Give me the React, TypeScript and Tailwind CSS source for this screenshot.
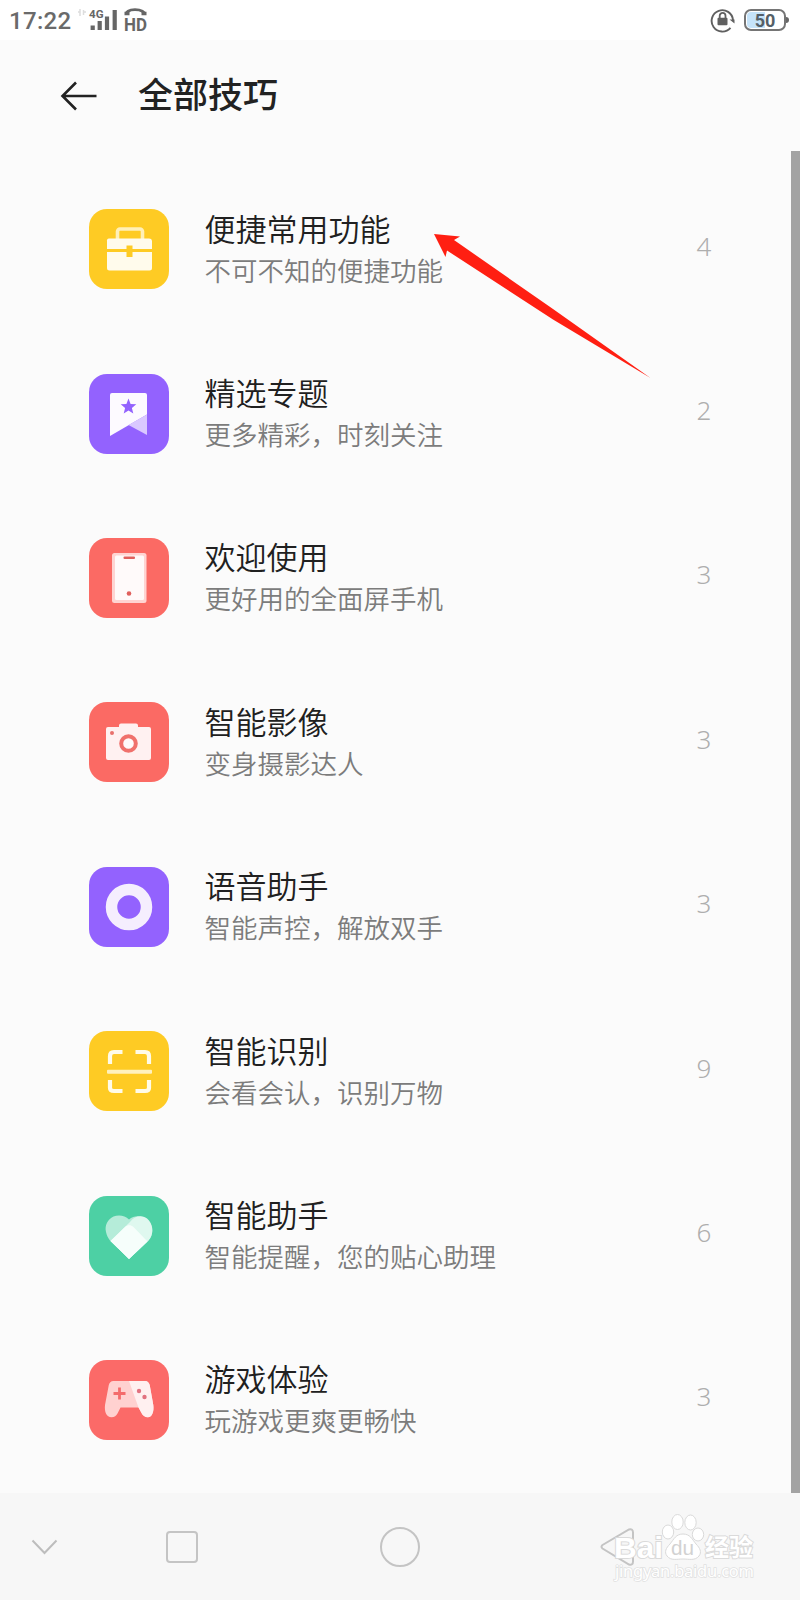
import type { ReactNode } from 'react';

type Tip = {
  title: string;
  desc: string;
  count: number;
  bg: string;
  icon: ReactNode;
};

const tips: Tip[] = [
  {
    title: '便捷常用功能',
    desc: '不可不知的便捷功能',
    count: 4,
    bg: 'bg-[#fecb24]',
    icon: (
      <>
        <path d="M28.500 32v-9.500a2.500 2.500 0 0 1 2.500-2.500h20a2.500 2.500 0 0 1 2.500 2.500V32" fill="none" stroke="#fff0b8" strokeWidth="3.600" />
        <path d="M20 29.500h40a3 3 0 0 1 3 3V40H43.500v-3.500h-6V40H18v-7.500a2.500 2.500 0 0 1 2-3z" fill="#fffbec" />
        <path d="M18 43h19.500v5h6v-5H63v16a2.500 2.500 0 0 1-2.500 2.500h-40A2.500 2.500 0 0 1 18 59z" fill="#fffbec" />
      </>
    ),
  },
  {
    title: '精选专题',
    desc: '更多精彩，时刻关注',
    count: 2,
    bg: 'bg-[#9362fe]',
    icon: (
      <>
        <path d="M23 19h33a2 2 0 0 1 2 2v19.500L21 62V21a2 2 0 0 1 2-2z" fill="#fdfaff" />
        <path d="M58 40.500V61L39.500 51z" fill="#dac8ff" />
        <path d="M39.500 24.500l2.100 5.400 5.700.3-4.400 3.700 1.400 5.600-4.800-3.100-4.800 3.100 1.400-5.600-4.400-3.700 5.700-.3z" fill="#9362fe" />
      </>
    ),
  },
  {
    title: '欢迎使用',
    desc: '更好用的全面屏手机',
    count: 3,
    bg: 'bg-[#fb6a64]',
    icon: (
      <>
        <rect x="23" y="15" width="34.500" height="50" rx="2.500" fill="#ffd4d2" />
        <rect x="26" y="17.500" width="29" height="44.500" rx="1.500" fill="#fffafa" />
        <rect x="34.500" y="18.500" width="11.500" height="2.400" rx="1" fill="#e0605d" />
        <circle cx="40" cy="55.500" r="2.300" fill="#e0605d" />
      </>
    ),
  },
  {
    title: '智能影像',
    desc: '变身摄影达人',
    count: 3,
    bg: 'bg-[#fb6a64]',
    icon: (
      <>
        <path d="M19 25h11v-1.500a2 2 0 0 1 2-2h15a2 2 0 0 1 2 2V25h11a2 2 0 0 1 2 2v29a2 2 0 0 1-2 2H19a2 2 0 0 1-2-2V27a2 2 0 0 1 2-2z" fill="#fff1f1" />
        <circle cx="39.500" cy="41.500" r="7.300" fill="#fffafa" stroke="#f0716c" strokeWidth="4" />
        <circle cx="23" cy="31" r="2" fill="#e8706c" />
      </>
    ),
  },
  {
    title: '语音助手',
    desc: '智能声控，解放双手',
    count: 3,
    bg: 'bg-[#9362fe]',
    icon: <circle cx="40" cy="40" r="17.500" fill="none" stroke="#f5eefe" strokeWidth="11.500" />,
  },
  {
    title: '智能识别',
    desc: '会看会认，识别万物',
    count: 9,
    bg: 'bg-[#fecb24]',
    icon: (
      <>
        <path
          d="M21 33v-8q0-4 4-4h8.500M46.500 21H56q4 0 4 4v8M60 49v8q0 3-4 3h-9.500M33.500 60H25q-4 0-4-3v-8"
          fill="none"
          stroke="#fffbe8"
          strokeWidth="4.200"
        />
        <rect x="18" y="38.700" width="45" height="4" rx="1" fill="#fff1bd" />
      </>
    ),
  },
  {
    title: '智能助手',
    desc: '智能提醒，您的贴心助理',
    count: 6,
    bg: 'bg-[#4dd0a4]',
    icon: (
      <>
        <path d="M40 23.500C36 19 29 18.500 24.500 20.500c-6 3-9 9-7.500 15.500.6 3 2 6 4 8.500L40 63l19.500-18.500c5-5 5-14 .5-19-5.500-6-14-7-20-2z" fill="#b5ecd9" />
        <path d="M21.500 45L41 26c6-7.500 14-7 19-1.500 4.500 5.500 4.500 14.500-.5 20L40 63z" fill="#dff8ef" />
        <path d="M21.500 45L36 31c2.500-2.500 6-2.500 8.500 0L58.500 45.500 40 63z" fill="#f6fefb" />
      </>
    ),
  },
  {
    title: '游戏体验',
    desc: '玩游戏更爽更畅快',
    count: 3,
    bg: 'bg-[#fb6a68]',
    icon: (
      <>
        <path d="M24.500 21h31.500c2.800 0 4 1.800 4.700 4l3.600 20c.8 6-.8 12.200-5.500 12.200-3 0-5-1.700-6-3.700L49.500 47.500h-18L28.500 53.500c-1.200 2.200-3 3.700-6 3.700-5 0-7.300-5.200-6.500-12.200l3.800-20c.5-2.200 2-4 4.700-4z" fill="#ffd1d0" />
        <path d="M40 21h16c2.800 0 4 1.800 4.700 4l3.600 20c.8 6-.8 12.200-5.500 12.200-3 0-5-1.700-6-3.700L49.500 47.500z" fill="#fff0f0" />
        <path d="M30.500 27.500v12M24.500 33.500h12" stroke="#f46b6b" strokeWidth="2.800" />
        <circle cx="50" cy="31" r="2.200" fill="#e27280" />
        <circle cx="55.500" cy="37" r="2.200" fill="#e27280" />
      </>
    ),
  },
];

const StatusBar = () => {
  return (
    <div className="h-10 bg-white flex items-center justify-between pl-[9px] pr-[11px] text-[#6a6a6a]">
      <div className="flex items-center">
        <span className="font-['Roboto'] font-medium text-[24px] leading-10 pt-[2px] tracking-[0.3px] w-[68px]">17:22</span>
        <svg width="75" height="40" viewBox="77 0 75 40" fill="none">
          <path d="M80 9v7M83.500 10v5M78 12h2M83.500 12h2.500" stroke="#ddd" strokeWidth="1.500" />
          <text x="89" y="17.500" fontSize="11" fontWeight="700" fontFamily="Roboto, sans-serif" fill="#666" textLength="14.500" lengthAdjust="spacingAndGlyphs">4G</text>
          <path d="M92.700 25.500v4.500M99.700 21v9M107 16.500v13.500M114.700 10v20" stroke="#666" strokeWidth="4.200" />
          <path d="M126.500 13.500c0-1 1.500-3.800 8.500-3.800s9.500 2.800 9.500 3.800" stroke="#666" strokeWidth="2.800" />
          <path d="M124.500 13.500h5M141.500 13.500h5" stroke="#666" strokeWidth="3.600" />
          <text x="124" y="31" fontSize="19" fontWeight="700" fontFamily="Roboto, sans-serif" fill="#666" textLength="23" lengthAdjust="spacingAndGlyphs">HD</text>
        </svg>
      </div>
      <div className="flex items-center gap-[9px]">
        <svg width="25" height="25" viewBox="0 0 25 25" fill="none" stroke="#606060">
          <path d="M20.500 19.800A10.700 10.700 0 1 1 23 12" strokeWidth="1.900" />
          <path d="M19.500 11.500h5v4z" fill="#606060" stroke="none" />
          <rect x="7.500" y="9.700" width="10" height="7.600" rx="1" fill="#606060" stroke="none" />
          <path d="M9.700 10.500V7.800a2.900 2.900 0 0 1 5.800 0v2.700" strokeWidth="1.800" />
        </svg>
        <div className="flex items-center">
          <div className="w-[42px] h-[22px] rounded-[7px] border-2 border-[#757575] p-px">
            <div className="h-full rounded-[4px] bg-linear-to-r from-[#c5e3f9] from-50% to-white to-50% flex items-center justify-center pt-px font-['Roboto'] font-bold text-[18px] text-[#555f68]">
              50
            </div>
          </div>
          <div className="w-[3px] h-[6px] bg-[#666] rounded-r-sm" />
        </div>
      </div>
    </div>
  );
};

const Header = () => {
  return (
    <header className="h-[111px] flex items-center pl-[60px]">
      <svg width="38" height="30" viewBox="0 0 38 30" fill="none" stroke="#222" strokeWidth="2.600">
        <path d="M36.500 15H2.500M16 1.500L2.500 15 16 28.500" />
      </svg>
      <h1 className="ml-[40px] pb-[5px] text-[35px] leading-[50px] font-medium text-[#222]">全部技巧</h1>
    </header>
  );
};

const TipRow = ({ tip }: { tip: Tip }) => {
  return (
    <li className="h-[164.4px] flex items-center">
      <div className={`size-20 rounded-[18px] overflow-hidden ${tip.bg}`}>
        <svg width="80" height="80" viewBox="0 0 80 80">{tip.icon}</svg>
      </div>
      <div className="ml-[35.500px] pb-[2px] flex-1">
        <h2 className="text-[31px] leading-[42px] font-[350] text-[#202020]">{tip.title}</h2>
        <p className="text-[26.500px] leading-[41px] font-[350] text-[#7c7c7c]">{tip.desc}</p>
      </div>
      <span className="w-[20px] mr-[77px] pb-[7px] text-center font-['Noto_Sans'] font-[350] text-[26px] leading-9 text-[#aeaeae]">
        {tip.count}
      </span>
    </li>
  );
};

// Paw logo with the site name, laid over the back button
const Watermark = () => {
  return (
    <svg className="absolute left-[608px] top-[17px]" width="160" height="76" viewBox="608 1510 160 76" fill="#fff" stroke="#dadada" strokeWidth="1">
      <g fontFamily="'Liberation Sans', 'Noto Sans CJK SC', sans-serif" fontWeight="700">
        <text x="614" y="1558" fontSize="29" textLength="49" lengthAdjust="spacingAndGlyphs" strokeWidth="2" paintOrder="stroke">Bai</text>
        <ellipse cx="668" cy="1532" rx="5.700" ry="7" />
        <ellipse cx="677.500" cy="1522" rx="5.700" ry="7.500" />
        <ellipse cx="690.500" cy="1522.500" rx="5.700" ry="7.500" />
        <ellipse cx="698" cy="1534.500" rx="5.700" ry="6.500" />
        <path d="M683 1534c7 0 9 5 13 10 4 4 6 8 3 12-4 5-10 3-16 3s-12 2-16-3c-3-4-1-8 3-12 4-5 6-10 13-10z" />
        <text x="671" y="1555" fontSize="20" fontWeight="400" textLength="23" lengthAdjust="spacingAndGlyphs" fill="#d2d2d2" stroke="none">du</text>
        <text x="705" y="1556" fontSize="24" strokeWidth="2" paintOrder="stroke">经验</text>
      </g>
      <text x="615" y="1577" fontSize="16.500" fontFamily="'Noto Sans', sans-serif" textLength="139" stroke="#e0e0e0" strokeWidth="1.500" paintOrder="stroke">jingyan.baidu.com</text>
    </svg>
  );
};

const NavBar = () => {
  return (
    <nav className="relative h-[107px] bg-[#f7f7f7] flex items-center">
      <svg className="ml-[31px]" width="27" height="16" viewBox="0 0 27 16" fill="none" stroke="#bdbdbd" strokeWidth="2">
        <path d="M1.500 1.500l12 12.500 12-12.500" />
      </svg>
      <div className="ml-[108px] size-8 rounded-[4px] border-2 border-[#c4c4c4]" />
      <div className="ml-[182px] size-10 rounded-full border-2 border-[#c4c4c4]" />
      <svg className="ml-[180px]" width="36" height="40" viewBox="0 0 36 40" fill="none" stroke="#c4c4c4" strokeWidth="2">
        <path d="M2.500 18L29 2.500q4-1 4 3v29q0 4-4 3L2.500 21.500q-2-1.700 0-3.500z" />
      </svg>
      <Watermark />
    </nav>
  );
};

const App = () => {
  return (
    <div className="relative w-[800px] h-[1600px] overflow-hidden bg-[#fbfbfb] font-['Noto_Sans_CJK_SC',sans-serif] flex flex-col">
      <StatusBar />
      <Header />
      <main className="h-[1342px] flex">
        <ul className="flex-1 pl-[89px] pt-[16px]">
          {tips.map((tip) => (
            <TipRow key={tip.title} tip={tip} />
          ))}
        </ul>
        <div className="w-[9px] bg-[#a3a3a3]" />
      </main>
      <NavBar />
      {/* Pointer to the first entry */}
      <svg className="absolute left-[430px] top-[230px]" width="224" height="152" viewBox="430 230 224 152">
        <path d="M434 234l26 2.500-6 3.500L553 309 650.500 378 553 319.500 447 250.500l-1.500 6.500z" fill="#ff1f12" />
      </svg>
    </div>
  );
};

export default App;
